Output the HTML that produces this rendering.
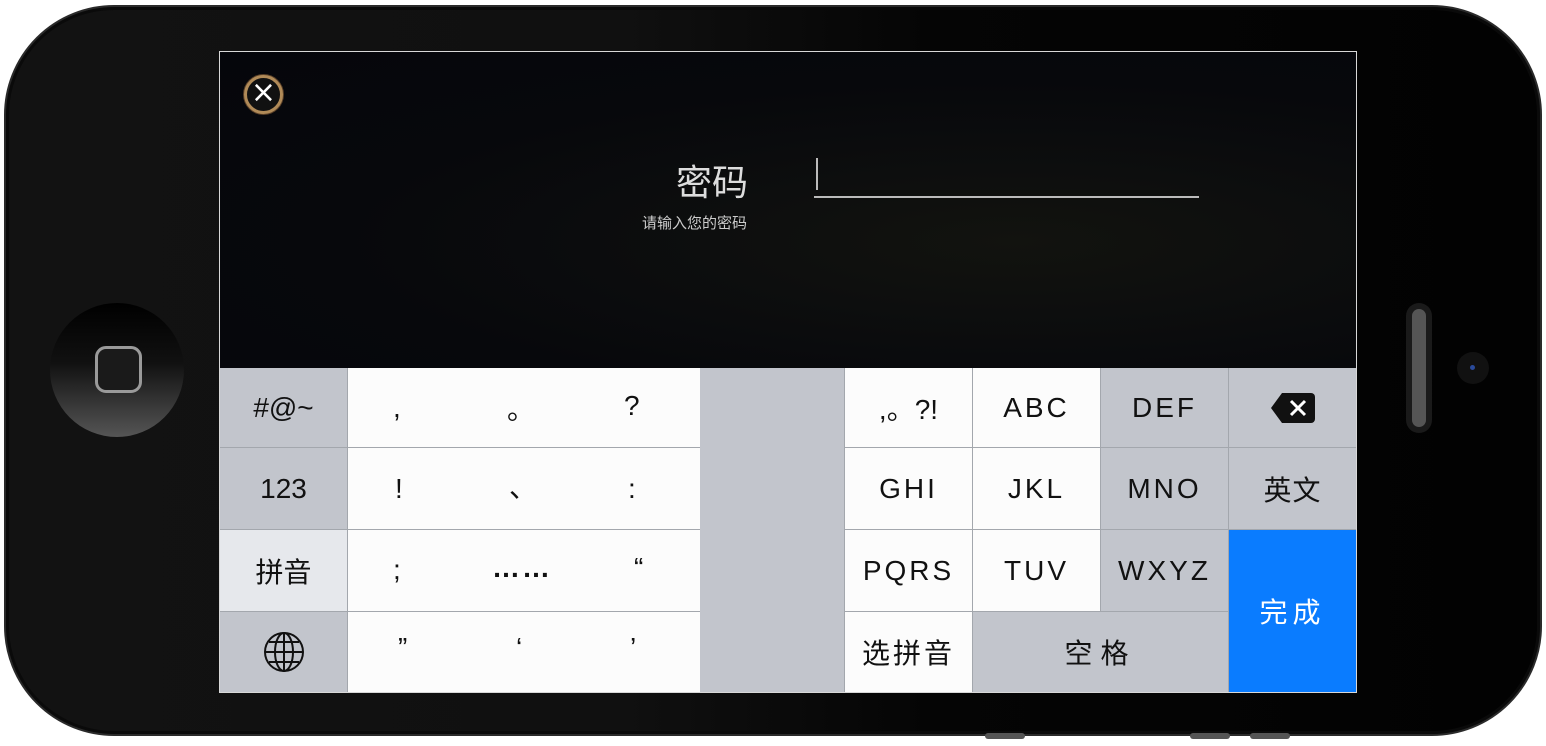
<!DOCTYPE html>
<html><head><meta charset="utf-8"><style>
*{margin:0;padding:0;box-sizing:border-box}
body{width:1546px;height:746px;background:#fff;position:relative;overflow:hidden;font-family:"Liberation Sans","Noto Sans CJK SC",sans-serif}
.phone{position:absolute;left:4px;top:5px;width:1538px;height:731px;border-radius:110px;background:linear-gradient(90deg,#121212 0%,#101010 40%,#050505 60%,#020202 100%);border:2px solid #2a2a2a;box-shadow:inset 0 0 0 3px #0a0a0a}
.screen{position:absolute;left:219px;top:51px;width:1138px;height:642px;border:1px solid #d8d8d8;background:#06070c;overflow:hidden}
.top{position:absolute;left:0;top:0;width:1136px;height:316px;background:radial-gradient(ellipse at 70% 60%,#12130f 0%,#07080c 60%,#05060b 100%)}
.k{position:absolute;display:flex;align-items:center;justify-content:center;font-size:28px;color:#111;letter-spacing:3px}
.w{background:#fcfcfc}.g{background:#c2c5cc}
.a{position:absolute;font-size:28px;color:#111}
</style></head><body>
<div class="phone"></div>
<div style="position:absolute;left:985px;top:733px;width:40px;height:6px;background:#555;border-radius:3px"></div>
<div style="position:absolute;left:1190px;top:733px;width:40px;height:6px;background:#555;border-radius:3px"></div>
<div style="position:absolute;left:1250px;top:733px;width:40px;height:6px;background:#555;border-radius:3px"></div>
<div style="position:absolute;left:50px;top:303px;width:134px;height:134px;border-radius:50%;background:linear-gradient(180deg,#000 0%,#111 45%,#555 100%)"></div>
<div style="position:absolute;left:95px;top:346px;width:47px;height:47px;border:3px solid #9a9a9a;border-radius:11px;background:#1a1a1a"></div>
<div style="position:absolute;left:1406px;top:303px;width:26px;height:130px;border-radius:13px;background:#1a1a1a"><div style="position:absolute;left:6px;top:6px;width:14px;height:118px;border-radius:7px;background:#555"></div></div>
<div style="position:absolute;left:1457px;top:352px;width:32px;height:32px;border-radius:50%;background:#111"><div style="position:absolute;left:13px;top:13px;width:5px;height:5px;border-radius:50%;background:#2a4a9a"></div></div>
<div class="screen">
<div class="top"></div>
<div style="position:absolute;left:24px;top:23px;width:39px;height:39px;border-radius:50%;background:#111;border:3px solid #b08a58;box-shadow:0 0 0 1px #5a4028"></div>
<div style="position:absolute;left:24px;top:22px;width:39px;height:39px;color:#fff;font-size:30px;text-align:center;line-height:38px;font-family:'DejaVu Sans',sans-serif">×</div>
<div style="position:absolute;left:456px;top:102px;font-size:36px;color:#ddd">密码</div>
<div style="position:absolute;left:422px;top:160px;font-size:15px;color:#ccc">请输入您的密码</div>
<div style="position:absolute;left:596px;top:106px;width:2px;height:32px;background:#bbb"></div>
<div style="position:absolute;left:594px;top:144px;width:385px;height:2px;background:#bbb"></div>
<div style="position:absolute;left:0;top:316px;width:1136px;height:324px;background:#a3a7ad"></div>
<div class="k g" style="left:0;top:316px;width:127px;height:79px;letter-spacing:0">#@~</div>
<div class="k g" style="left:0;top:396px;width:127px;height:81px;letter-spacing:0">123</div>
<div class="k" style="left:0;top:478px;width:127px;height:81px;background:#e6e8ec;letter-spacing:0">拼音</div>
<div class="k g" style="left:0;top:560px;width:127px;height:80px"><svg width="42" height="42" viewBox="0 0 42 42" fill="none" stroke="#111" stroke-width="2"><circle cx="21" cy="21" r="19"/><ellipse cx="21" cy="21" rx="9" ry="19"/><line x1="21" y1="2" x2="21" y2="40"/><line x1="2" y1="21" x2="40" y2="21"/><path d="M6 11h30M6 31h30"/></svg></div>
<div class="w" style="position:absolute;left:128px;top:316px;width:352px;height:79px"></div>
<div class="w" style="position:absolute;left:128px;top:396px;width:352px;height:81px"></div>
<div class="w" style="position:absolute;left:128px;top:478px;width:352px;height:81px"></div>
<div class="w" style="position:absolute;left:128px;top:560px;width:352px;height:80px"></div>
<div class="a" style="left:173px;top:340px">,</div><div class="a" style="left:287px;top:336px">。</div><div class="a" style="left:404px;top:338px">?</div>
<div class="a" style="left:175px;top:421px">!</div><div class="a" style="left:289px;top:414px">、</div><div class="a" style="left:408px;top:421px">:</div>
<div class="a" style="left:173px;top:502px">;</div><div class="a" style="left:272px;top:500px;letter-spacing:2px;font-weight:bold">……</div><div class="a" style="left:414px;top:500px">“</div>
<div class="a" style="left:178px;top:580px">”</div><div class="a" style="left:296px;top:580px">‘</div><div class="a" style="left:410px;top:580px">’</div>
<div class="g" style="position:absolute;left:480px;top:316px;width:144px;height:324px"></div>
<div class="k w" style="left:625px;top:316px;width:127px;height:79px;letter-spacing:0">,。?!</div>
<div class="k w" style="left:753px;top:316px;width:127px;height:79px">ABC</div>
<div class="k g" style="left:881px;top:316px;width:127px;height:79px">DEF</div>
<div class="k g" style="left:1009px;top:316px;width:127px;height:79px"><svg width="46" height="32" viewBox="0 0 46 32"><path d="M12 1h29a4 4 0 0 1 4 4v22a4 4 0 0 1-4 4H12L1 16Z" fill="#111"/><path d="M21 9l14 14M35 9L21 23" stroke="#fff" stroke-width="3"/></svg></div>
<div class="k w" style="left:625px;top:396px;width:127px;height:81px">GHI</div>
<div class="k w" style="left:753px;top:396px;width:127px;height:81px">JKL</div>
<div class="k g" style="left:881px;top:396px;width:127px;height:81px">MNO</div>
<div class="k g" style="left:1009px;top:396px;width:127px;height:81px;letter-spacing:1px">英文</div>
<div class="k w" style="left:625px;top:478px;width:127px;height:81px">PQRS</div>
<div class="k w" style="left:753px;top:478px;width:127px;height:81px">TUV</div>
<div class="k g" style="left:881px;top:478px;width:127px;height:81px">WXYZ</div>
<div class="k w" style="left:625px;top:560px;width:127px;height:80px">选拼音</div>
<div class="k g" style="left:753px;top:560px;width:255px;height:80px;letter-spacing:8px">空格</div>
<div class="k" style="left:1009px;top:478px;width:127px;height:162px;background:#0a7cff;color:#fff;letter-spacing:5px">完成</div>
</div>
</body></html>
